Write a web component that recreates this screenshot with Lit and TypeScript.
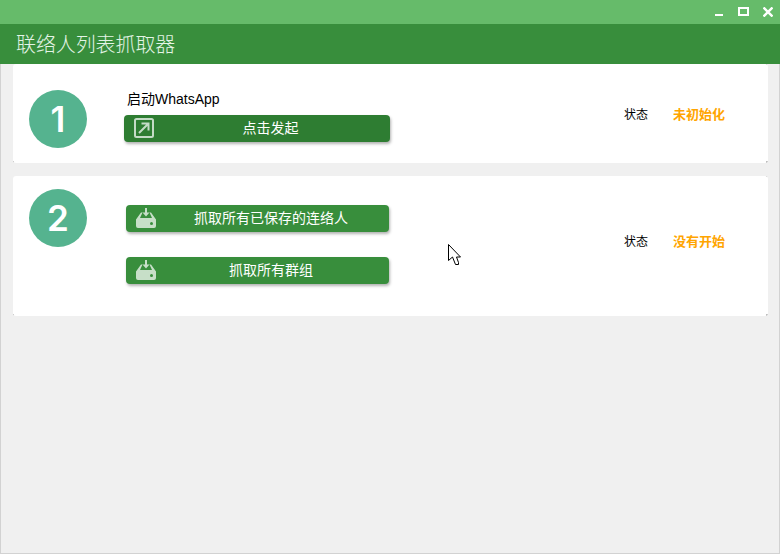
import { LitElement, html, css, svg } from "lit";
import { customElement } from "lit/decorators.js";

const openIcon = svg`<svg class="icon" width="20" height="20" viewBox="0 0 20 20" fill="none" stroke="#fff" stroke-opacity=".72"><rect x="1" y="1" width="18" height="18" rx="1.5" stroke-width="2"/><path d="M5 15 14 6M7.5 5.5H14.5V12.5" stroke-width="2"/></svg>`;
const trayIcon = svg`<svg class="icon" width="20" height="20" viewBox="0 0 20 20"><path fill="#fff" fill-opacity=".72" d="M9 0h2v4.500h2.500L10 8.500 6.500 4.500H9zM5 4.500h1.500L4 10h12l-2.500-5.500H15l5 7V18a2 2 0 0 1-2 2H2a2 2 0 0 1-2-2v-6.500z"/><circle cx="15.500" cy="15.500" r="1.500" fill="#388e3c"/></svg>`;

@customElement("app-root")
export class AppRoot extends LitElement {
  static styles = css`
    :host {
      display: block;
      width: 780px;
      height: 554px;
      font-family: "Noto Sans CJK SC", "Liberation Sans", sans-serif;
      background: #f0f0f0;
      position: relative;
      overflow: hidden;
    }
    .window { display: flex; flex-direction: column; height: 554px; box-sizing: border-box; }
    .titlebar {
      height: 24px;
      box-sizing: border-box;
      background: #66bb6a;
      display: flex;
      align-items: flex-start;
      justify-content: flex-end;
      padding: 7px 7px 0 0;
      flex: none;
    }
    .titlebar svg { display: block; }
    .titlebar .min { margin-right: 15px; }
    .titlebar .max { margin-right: 14px; }
    .header {
      height: 40px;
      flex: none;
      background: #388e3c;
      color: #e3f4e6;
      font-size: 20px;
      line-height: 40px;
      padding-left: 16px;
      font-weight: 300;
      letter-spacing: -0.1px;
    }
    .body {
      flex: 1;
      border: 1px solid #d2d2d2;
      border-top: 0;
      padding: 0 11px 0 12px;
      display: flex;
      flex-direction: column;
      gap: 13px;
    }
    .card {
      display: flex;
      background:
        linear-gradient(#bdbdbd, #bdbdbd) right bottom / 2px 2px no-repeat,
        linear-gradient(#d6d6d6, #d6d6d6) right top / 2px 1px no-repeat,
        linear-gradient(#bdbdbd, #bdbdbd) left bottom / 1px 2px no-repeat,
        #fff;
      border-radius: 3px;
      padding-left: 16px;
    }
    .card.one { height: 99px; }
    .card.two { height: 140px; }
    .circle {
      width: 58px;
      height: 58px;
      flex: none;
      border-radius: 50%;
      background: #55b38f;
      color: #fff;
      font-family: Inter, "Liberation Sans", sans-serif;
      font-weight: 600;
      font-size: 35px;
      display: flex;
      align-items: center;
      justify-content: center;
    }
    .one .circle { margin-top: 26px; }
    .two .circle { margin-top: 13px; }
    .mid { display: flex; flex-direction: column; flex: none; }
    .one .mid { margin-left: 37px; padding-top: 26px; width: 266px; }
    .two .mid { margin-left: 39px; padding-top: 29px; width: 263px; gap: 25px; }
    .lead {
      font-family: "Liberation Sans", "Noto Sans CJK SC", sans-serif;
      font-size: 14px;
      line-height: 18px;
      height: 25px;
      color: #000;
      padding-left: 3px;
    }
    .btn {
      height: 27px;
      box-sizing: border-box;
      padding: 0 0 4px 27px;
      background: #388e3c;
      border-radius: 4px;
      box-shadow: 1px 2px 3px rgba(0, 0, 0, 0.3);
      color: #fff;
      font-size: 14px;
      position: relative;
      display: flex;
      align-items: center;
      justify-content: center;
    }
    .btn.dark { background: #2e7d32; }
    .icon { position: absolute; left: 10px; top: 3px; }
    .status {
      margin-left: auto;
      margin-right: 44px;
      display: flex;
      align-items: center;
      width: 100px;
      height: 20px;
    }
    .one .status { margin-top: 39px; }
    .two .status { margin-top: 54px; }
    .label { width: 49px; font-size: 12px; color: #000; flex: none; }
    .value { font-size: 13px; font-weight: 700; color: #ffa500; white-space: nowrap; }
    .cursor { position: absolute; left: 448px; top: 244px; }
  `;

  render() {
    return html`
      <div class="window">
        <div class="titlebar">
          <svg class="min" width="8" height="9" viewBox="0 0 8 9"><rect y="7" width="8" height="2" fill="#fff"/></svg>
          <svg class="max" width="11" height="9" viewBox="0 0 11 9" fill="none" stroke="#fff" stroke-width="2"><rect x="1" y="1" width="9" height="7"/></svg>
          <svg width="10" height="10" viewBox="0 0 10 10" stroke="#fff" stroke-width="2.400"><path d="M.5.500 9.500 9.500M9.500.500 .5 9.500"/></svg>
        </div>
        <div class="header">联络人列表抓取器</div>
        <div class="body">
          <div class="card one">
            <div class="circle">1</div>
            <div class="mid">
              <div class="lead">启动WhatsApp</div>
              <div class="btn dark">${openIcon}<span>点击发起</span></div>
            </div>
            <div class="status"><span class="label">状态</span><span class="value">未初始化</span></div>
          </div>
          <div class="card two">
            <div class="circle">2</div>
            <div class="mid">
              <div class="btn">${trayIcon}<span>抓取所有已保存的连络人</span></div>
              <div class="btn">${trayIcon}<span>抓取所有群组</span></div>
            </div>
            <div class="status"><span class="label">状态</span><span class="value">没有开始</span></div>
          </div>
        </div>
      </div>
      <svg class="cursor" width="14" height="22" viewBox="0 0 14 22"><path d="M.5.500V16.500L4.500 13 7.500 20.500H10.500V18.500L8.500 13H12.500z" fill="#fff" stroke="#000"/></svg>
    `;
  }
}
